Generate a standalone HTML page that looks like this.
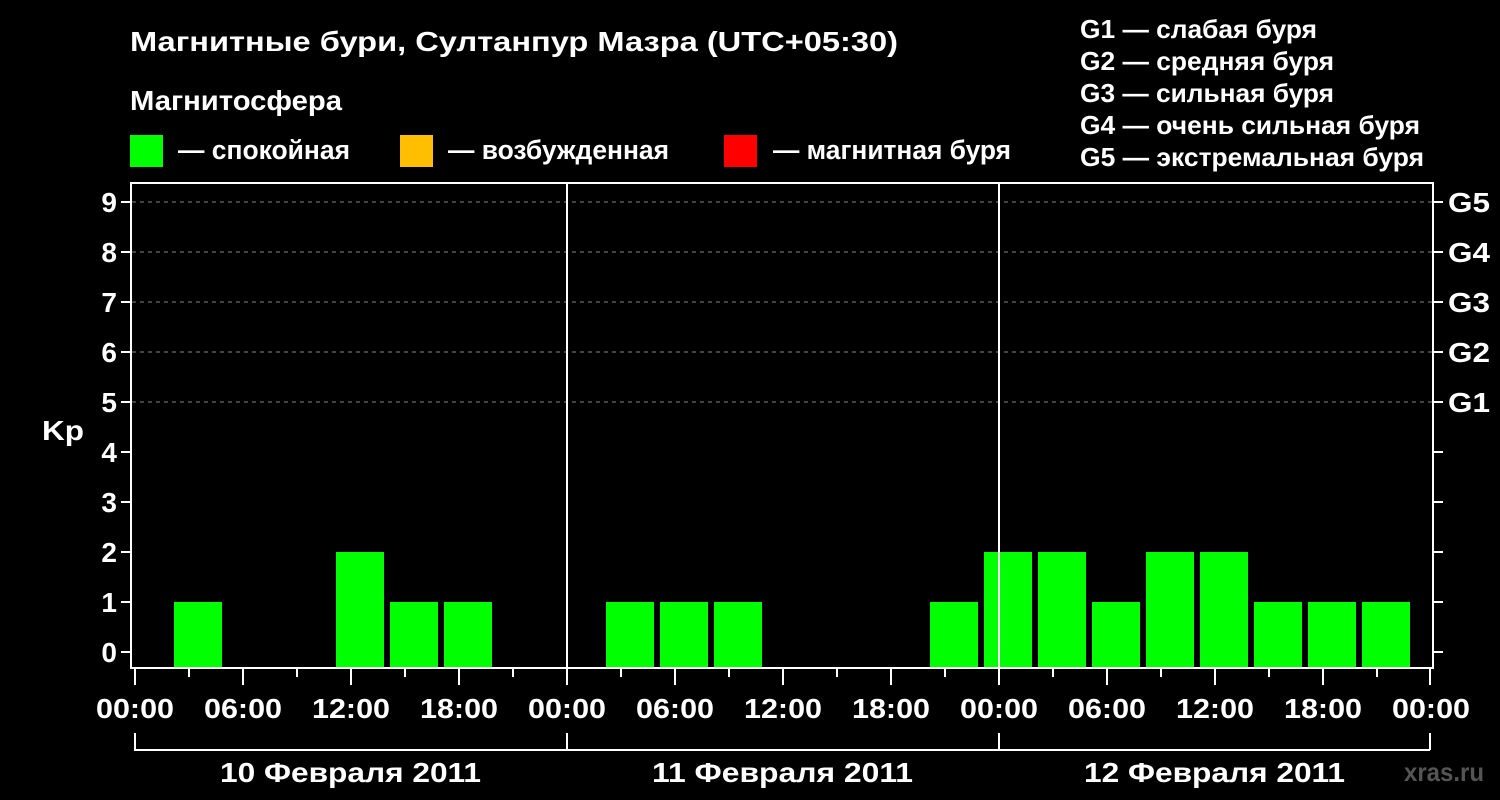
<!DOCTYPE html>
<html><head><meta charset="utf-8"><style>
html,body{margin:0;padding:0;background:#000;}
svg{display:block;font-family:"Liberation Sans",Arial,sans-serif;font-weight:bold;}
</style></head><body>
<svg width="1500" height="800" viewBox="0 0 1500 800" xmlns="http://www.w3.org/2000/svg">
<rect width="1500" height="800" fill="#000"/>
<g fill="#fff">
<text x="130" y="51" font-size="28" textLength="768" lengthAdjust="spacingAndGlyphs">Магнитные бури, Султанпур Мазра (UTC+05:30)</text>
<text x="130" y="110" font-size="28" textLength="212" lengthAdjust="spacingAndGlyphs">Магнитосфера</text>
<text x="178" y="159" font-size="27" textLength="172" lengthAdjust="spacingAndGlyphs">— спокойная</text>
<text x="448" y="159" font-size="27" textLength="221" lengthAdjust="spacingAndGlyphs">— возбужденная</text>
<text x="773" y="159" font-size="27" textLength="238" lengthAdjust="spacingAndGlyphs">— магнитная буря</text>
<text x="1080" y="38" font-size="26" textLength="237" lengthAdjust="spacingAndGlyphs">G1 — слабая буря</text>
<text x="1080" y="70" font-size="26" textLength="254" lengthAdjust="spacingAndGlyphs">G2 — средняя буря</text>
<text x="1080" y="102" font-size="26" textLength="254" lengthAdjust="spacingAndGlyphs">G3 — сильная буря</text>
<text x="1080" y="134" font-size="26" textLength="340" lengthAdjust="spacingAndGlyphs">G4 — очень сильная буря</text>
<text x="1080" y="166" font-size="26" textLength="344" lengthAdjust="spacingAndGlyphs">G5 — экстремальная буря</text>
</g>
<rect x="130" y="135" width="33" height="32" fill="#00ff00"/>
<rect x="400" y="135" width="33" height="32" fill="#ffbf00"/>
<rect x="724" y="135" width="33" height="32" fill="#ff0000"/>
<g stroke="#888" stroke-width="1" stroke-dasharray="4,4">
<line x1="132" y1="202" x2="1432" y2="202"/>
<line x1="132" y1="252" x2="1432" y2="252"/>
<line x1="132" y1="302" x2="1432" y2="302"/>
<line x1="132" y1="352" x2="1432" y2="352"/>
<line x1="132" y1="402" x2="1432" y2="402"/>
</g>
<g fill="#00ff00">
<rect x="174" y="602" width="48" height="66"/>
<rect x="336" y="552" width="48" height="116"/>
<rect x="390" y="602" width="48" height="66"/>
<rect x="444" y="602" width="48" height="66"/>
<rect x="606" y="602" width="48" height="66"/>
<rect x="660" y="602" width="48" height="66"/>
<rect x="714" y="602" width="48" height="66"/>
<rect x="930" y="602" width="48" height="66"/>
<rect x="984" y="552" width="48" height="116"/>
<rect x="1038" y="552" width="48" height="116"/>
<rect x="1092" y="602" width="48" height="66"/>
<rect x="1146" y="552" width="48" height="116"/>
<rect x="1200" y="552" width="48" height="116"/>
<rect x="1254" y="602" width="48" height="66"/>
<rect x="1308" y="602" width="48" height="66"/>
<rect x="1362" y="602" width="48" height="66"/>
</g>
<g stroke="#fff" stroke-width="2" fill="none">
<rect x="131" y="183" width="1302" height="485"/>
<line x1="567" y1="183" x2="567" y2="668"/>
<line x1="999" y1="183" x2="999" y2="668"/>
<path d="M121 202h10M121 252h10M121 302h10M121 352h10M121 402h10M121 452h10M121 502h10M121 552h10M121 602h10M121 652h10"/>
<path d="M1433 202h10M1433 252h10M1433 302h10M1433 352h10M1433 402h10M1433 452h10M1433 502h10M1433 552h10M1433 602h10M1433 652h10"/>
<path d="M135 668v17M243 668v17M351 668v17M459 668v17M567 668v17M675 668v17M783 668v17M891 668v17M999 668v17M1107 668v17M1215 668v17M1323 668v17M1430 668v17"/>
<path d="M189 668v9M297 668v9M405 668v9M513 668v9M621 668v9M729 668v9M837 668v9M945 668v9M1053 668v9M1161 668v9M1269 668v9M1377 668v9"/>
<path d="M135 733v17H1430M567 733v17M999 733v17M1430 733v17"/>
</g>
<g fill="#fff" font-size="28" text-anchor="end">
<text x="117" y="212">9</text><text x="117" y="262">8</text><text x="117" y="312">7</text>
<text x="117" y="362">6</text><text x="117" y="412">5</text><text x="117" y="462">4</text>
<text x="117" y="512">3</text><text x="117" y="562">2</text><text x="117" y="612">1</text>
<text x="117" y="662">0</text>
</g>
<text x="42" y="440" fill="#fff" font-size="28" textLength="42" lengthAdjust="spacingAndGlyphs">Kp</text>
<g fill="#fff" font-size="28">
<text x="1448" y="212" textLength="42" lengthAdjust="spacingAndGlyphs">G5</text>
<text x="1448" y="262" textLength="42" lengthAdjust="spacingAndGlyphs">G4</text>
<text x="1448" y="312" textLength="42" lengthAdjust="spacingAndGlyphs">G3</text>
<text x="1448" y="362" textLength="42" lengthAdjust="spacingAndGlyphs">G2</text>
<text x="1448" y="412" textLength="42" lengthAdjust="spacingAndGlyphs">G1</text>
</g>
<g fill="#fff" font-size="28">
<text x="96" y="718" textLength="78" lengthAdjust="spacingAndGlyphs">00:00</text>
<text x="204" y="718" textLength="78" lengthAdjust="spacingAndGlyphs">06:00</text>
<text x="312" y="718" textLength="78" lengthAdjust="spacingAndGlyphs">12:00</text>
<text x="420" y="718" textLength="78" lengthAdjust="spacingAndGlyphs">18:00</text>
<text x="528" y="718" textLength="78" lengthAdjust="spacingAndGlyphs">00:00</text>
<text x="636" y="718" textLength="78" lengthAdjust="spacingAndGlyphs">06:00</text>
<text x="744" y="718" textLength="78" lengthAdjust="spacingAndGlyphs">12:00</text>
<text x="852" y="718" textLength="78" lengthAdjust="spacingAndGlyphs">18:00</text>
<text x="960" y="718" textLength="78" lengthAdjust="spacingAndGlyphs">00:00</text>
<text x="1068" y="718" textLength="78" lengthAdjust="spacingAndGlyphs">06:00</text>
<text x="1176" y="718" textLength="78" lengthAdjust="spacingAndGlyphs">12:00</text>
<text x="1284" y="718" textLength="78" lengthAdjust="spacingAndGlyphs">18:00</text>
<text x="1392" y="718" textLength="78" lengthAdjust="spacingAndGlyphs">00:00</text>
<text x="220" y="782" textLength="261" lengthAdjust="spacingAndGlyphs">10 Февраля 2011</text>
<text x="652" y="782" textLength="261" lengthAdjust="spacingAndGlyphs">11 Февраля 2011</text>
<text x="1084" y="782" textLength="261" lengthAdjust="spacingAndGlyphs">12 Февраля 2011</text>
</g>
<text x="1404" y="781" fill="#555" font-size="26" textLength="80" lengthAdjust="spacingAndGlyphs">xras.ru</text>
</svg>
</body></html>
